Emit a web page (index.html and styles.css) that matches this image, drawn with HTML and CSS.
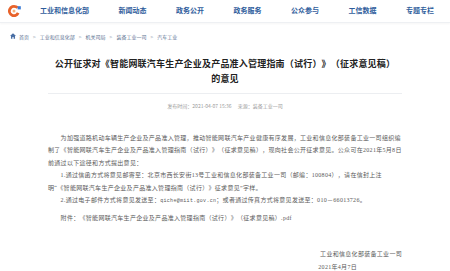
FILE: index.html
```html
<!DOCTYPE html>
<html lang="zh-CN">
<head>
  <meta charset="UTF-8">
  <title>公开征求意见 - 工业和信息化部</title>
  <link rel="stylesheet" href="styles.css">
</head>
<body>
  <header class="top">
    <div class="logo">
      <svg width="14" height="13" viewBox="0 0 14 13">
        <circle cx="6" cy="7" r="4.6" fill="none" stroke="#e8622a" stroke-width="2.8" stroke-dasharray="23 6" transform="rotate(25 6 7)"/>
        <circle cx="6" cy="7" r="1.5" fill="#f6b07a"/>
        <rect x="9.6" y="2.2" width="3.2" height="3.2" fill="#3a7bd5"/>
      </svg>
    </div>
    <nav class="menu">
      <a href="#">工业和信息化部</a>
      <a href="#">新闻动态</a>
      <a href="#">政务公开</a>
      <a href="#">政务服务</a>
      <a href="#">公众参与</a>
      <a href="#">工信数据</a>
      <a href="#">专题专栏</a>
    </nav>
  </header>

  <div class="crumbs">
    <svg class="home" width="6" height="6" viewBox="0 0 10 10">
      <path d="M5 0.5 L0 5 H1.6 V9.5 H4 V6.5 H6 V9.5 H8.4 V5 H10 Z" fill="#4a6fa5"/>
    </svg>
    <a href="#">首页</a><span class="sep">&gt;</span>
    <a href="#">工业和信息化部</a><span class="sep">&gt;</span>
    <a href="#">机关司局</a><span class="sep">&gt;</span>
    <a href="#">装备工业一司</a><span class="sep">&gt;</span>
    <a href="#">汽车工业</a>
  </div>

  <main class="article">
    <h1 class="title">公开征求对《智能网联汽车生产企业及产品准入管理指南（试行）》（征求意见稿）的意见</h1>
    <div class="meta">
      <span>发布时间：2021-04-07 15:36</span>
      <span>来源：装备工业一司</span>
    </div>

    <div class="content">
      <p>为加强道路机动车辆生产企业及产品准入管理，推动智能网联汽车产业健康有序发展，工业和信息化部装备工业一司组织编制了《智能网联汽车生产企业及产品准入管理指南（试行）》（征求意见稿），现向社会公开征求意见。公众可在2021年5月8日前通过以下途径和方式提出意见：</p>
      <p>1.通过信函方式将意见邮寄至：北京市西长安街13号工业和信息化部装备工业一司（邮编：100804），请在信封上注<span class="keep">明“《</span>智能网联汽车生产企业及产品准入管理指南（试行）》征求意见”字样。</p>
      <p>2.通过电子邮件方式将意见发送至：<span class="mono">qiche@miit.gov.cn</span>；或者通过传真方式将意见发送至：010－66013726。</p>
      <p class="attach">附件：《智能网联汽车生产企业及产品准入管理指南（试行）》（征求意见稿）.pdf</p>
    </div>

    <div class="sign">
      <div>工业和信息化部装备工业一司</div>
      <div class="date">2021年4月7日</div>
    </div>
  </main>
</body>
</html>
```

FILE: styles.css
```css
body
{
  margin: 0;
  font-family: "Noto Sans CJK SC", "Noto Sans", sans-serif;
  background: #fff;
  color: #333;
  text-spacing-trim: space-all;
}
a
{
  text-decoration: none;
  color: inherit;
}
.top
{
  height: 22px;
  display: flex;
  align-items: center;
  padding: 0 16px 0 8px;
  border-bottom: 1px solid #eef0f3;
  box-shadow: 0 1px 2px rgba(0, 0, 0, 0.04);
}
.logo
{
  width: 14px;
  height: 13px;
  display: flex;
  margin-top: -2px;
}
.menu
{
  flex: 1;
  display: flex;
  justify-content: space-between;
  margin-left: 18px;
  margin-top: -2px;
}
.menu a
{
  font-size: 7px;
  font-weight: bold;
  color: #2f5d9c;
  white-space: nowrap;
}
.crumbs
{
  display: flex;
  align-items: center;
  padding: 9px 0 0 10px;
  height: 8px;
  font-size: 5px;
  color: #5a6f8f;
}
.crumbs .home
{
  margin-right: 3px;
}
.crumbs .sep
{
  margin: 0 4px;
  color: #8a96a8;
}
.article
{
  width: 354px;
  margin: 0 auto;
  padding-top: 16px;
}
.title
{
  margin: 0;
  font-size: 9px;
  letter-spacing: 0.2px;
  line-height: 15px;
  font-weight: bold;
  text-align: center;
  color: #222;
  padding: 0 4px 7px;
  border-bottom: 1px solid #eceef1;
}
.meta
{
  display: flex;
  justify-content: center;
  gap: 6px;
  font-size: 5px;
  color: #9a9a9a;
  padding-top: 8px;
  height: 12px;
}
.content,
.sign
{
  font-family: "Liberation Serif", "Noto Sans CJK SC", serif;
  font-size: 6px;
  letter-spacing: 0.3px;
  color: #5a5a5a;
}
.content
{
  padding-top: 18px;
  line-height: 12.4px;
}
.content p
{
  margin: 0;
  text-indent: 12.6px;
}
.keep
{
  white-space: nowrap;
}
.content .mono
{
  font-family: "Liberation Mono", monospace;
  font-size: 5px;
}
.content .attach
{
  margin-top: 5px;
}
.sign
{
  padding-top: 23px;
  line-height: 13px;
  display: flex;
  flex-direction: column;
  align-items: flex-end;
}
.sign .date
{
  margin-right: 45px;
}
```
